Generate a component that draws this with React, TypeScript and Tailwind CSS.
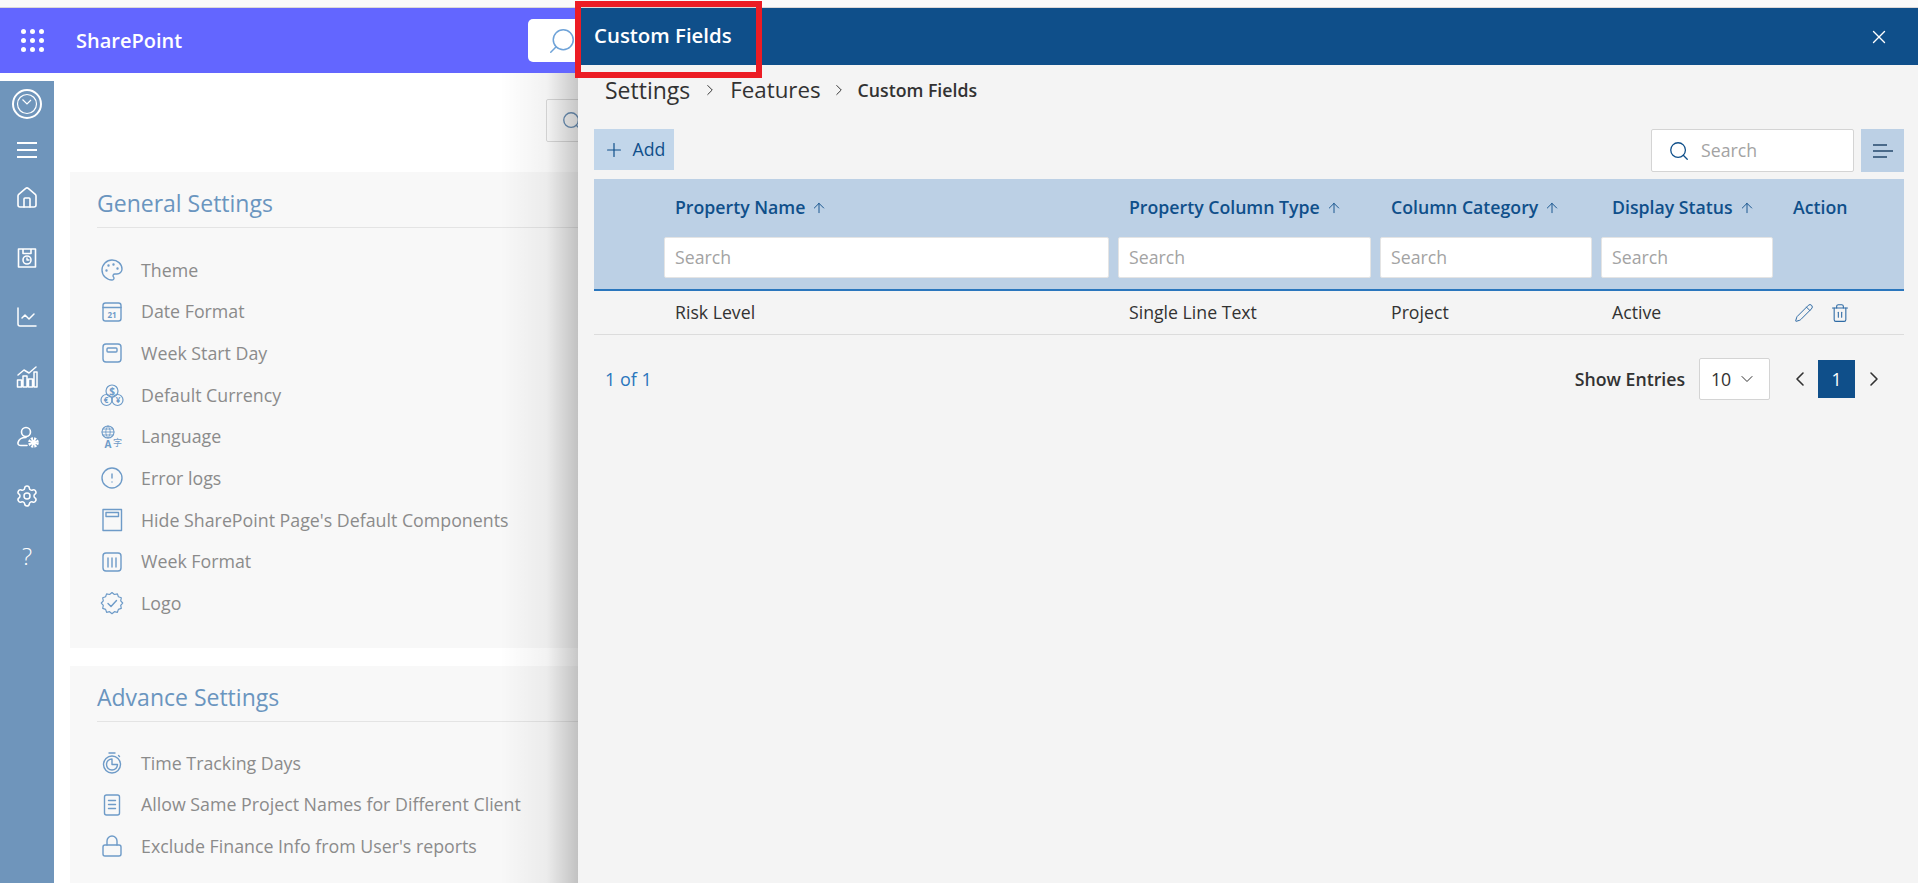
import { ArrowUp, ChevronDown, ChevronLeft, ChevronRight, CircleAlert, Home, LineChart, Lock, Palette, Pencil, Plus, Search, Settings, Trash2, X } from 'lucide-react';
import type { ReactNode } from 'react';

function Svg({ children, size = 24 }: { children: ReactNode; size?: number }) {
  return (
    <svg width={size} height={size} viewBox="0 0 24 24" fill="none" stroke="currentColor" strokeWidth="1.4" strokeLinecap="round" strokeLinejoin="round">
      {children}
    </svg>
  );
}

const DateIcon = () => (
  <Svg>
    <rect x="3" y="3" width="18" height="18" rx="2.5" />
    <path d="M3 7.5h18" />
    <text x="12" y="18" textAnchor="middle" fontSize="8" fontWeight="700" fill="currentColor" stroke="none">21</text>
  </Svg>
);
const WeekIcon = () => (
  <Svg>
    <rect x="3" y="3" width="18" height="18" rx="3" />
    <rect x="7" y="7" width="10" height="4" rx="1" />
  </Svg>
);
const CurrencyIcon = () => (
  <Svg>
    <circle cx="12" cy="8" r="6" strokeWidth="1.2" />
    <circle cx="6.500" cy="17" r="5.500" strokeWidth="1.2" />
    <circle cx="17.500" cy="17" r="5.500" strokeWidth="1.2" />
    <text x="12" y="11.500" textAnchor="middle" fontSize="10" fontWeight="700" fill="currentColor" stroke="none">$</text>
    <text x="6" y="20" textAnchor="middle" fontSize="8" fontWeight="700" fill="currentColor" stroke="none">€</text>
    <text x="18" y="20" textAnchor="middle" fontSize="8" fontWeight="700" fill="currentColor" stroke="none">¥</text>
  </Svg>
);
const LanguageIcon = () => (
  <Svg>
    <circle cx="8" cy="7" r="6" strokeWidth="1.1" />
    <path d="M2 7h12M8 1c-3 3.200-3 8.800 0 12M8 1c3 3.200 3 8.800 0 12M3 4h10M3 10h10" strokeWidth="0.9" />
    <text x="8" y="22.500" textAnchor="middle" fontSize="10" fontWeight="700" fill="currentColor" stroke="none">A</text>
    <text x="17.500" y="20.500" textAnchor="middle" fontSize="9" fill="currentColor" stroke="none" fontFamily="'Noto Sans CJK SC', sans-serif">字</text>
  </Svg>
);
const PanelIcon = () => (
  <Svg>
    <rect x="3" y="1.500" width="18.500" height="21" />
    <rect x="6" y="4.500" width="12.500" height="4" />
  </Svg>
);
const WeekFormatIcon = () => (
  <Svg>
    <rect x="3" y="3" width="18" height="18" rx="3" />
    <path d="M8 8v9M12 8v9M16 8v9" />
  </Svg>
);
const TimerIcon = () => (
  <Svg>
    <path d="M9 2h6M18.500 4.500l1 1" />
    <circle cx="12" cy="13.500" r="8.500" />
    <path d="M12 8a5.500 5.500 0 1 0 5.500 5.500H12z" />
  </Svg>
);
const DocIcon = () => (
  <Svg>
    <rect x="4.500" y="2" width="15" height="20" rx="2" />
    <path d="M8.500 7.500h7M8.500 11.500h7M8.500 15.500h7" />
  </Svg>
);
const LogoIcon = () => (
  <Svg>
    <path d="M12 1.500l2.400 2 3-.6 1 2.900 2.900 1-.6 3 2 2.200-2 2.400.6 3-2.900 1-1 2.900-3-.6-2.400 2-2.400-2-3 .6-1-2.900-2.900-1 .6-3-2-2.400 2-2.200-.6-3 2.900-1 1-2.900 3 .6z" strokeWidth="1.200" />
    <path d="M8 12.500l3 3 5.500-6" />
  </Svg>
);

const generalItems: { label: string; icon: ReactNode }[] = [
  { label: 'Theme', icon: <Palette size={24} strokeWidth={1.4} /> },
  { label: 'Date Format', icon: <DateIcon /> },
  { label: 'Week Start Day', icon: <WeekIcon /> },
  { label: 'Default Currency', icon: <CurrencyIcon /> },
  { label: 'Language', icon: <LanguageIcon /> },
  { label: 'Error logs', icon: <CircleAlert size={24} strokeWidth={1.4} /> },
  { label: "Hide SharePoint Page's Default Components", icon: <PanelIcon /> },
  { label: 'Week Format', icon: <WeekFormatIcon /> },
  { label: 'Logo', icon: <LogoIcon /> },
];

const advanceItems: { label: string; icon: ReactNode }[] = [
  { label: 'Time Tracking Days', icon: <TimerIcon /> },
  { label: 'Allow Same Project Names for Different Client', icon: <DocIcon /> },
  { label: "Exclude Finance Info from User's reports", icon: <Lock size={24} strokeWidth={1.4} /> },
];

const columns = ['Property Name', 'Property Column Type', 'Column Category', 'Display Status'];

function SettingsCard({ title, items, className, listTop }: { title: string; items: { label: string; icon: ReactNode }[]; className: string; listTop: string }) {
  return (
    <section className={`bg-[#f8f8f8] pl-[27px] ${className}`}>
      <h2 className="h-[56px] flex items-end pb-[7px] border-b border-[#e4e4e4] text-[23px] text-[#6a95bf]">{title}</h2>
      <ul className={listTop}>
        {items.map((item) => (
          <li key={item.label} className="h-[41.7px] flex items-center text-[17.8px] text-[#8b8b8b]">
            <span className="w-[30px] flex justify-center text-[#6e9bc8]">{item.icon}</span>
            <span className="ml-[14px]">{item.label}</span>
          </li>
        ))}
      </ul>
    </section>
  );
}

function Sidebar() {
  const icons = [
    <Home key="home" size={24} strokeWidth={1.6} />,
    <Svg key="time">
      <path d="M3.500 3h17v18h-17zM8 3v4.500h8V3" strokeWidth="1.600" />
      <circle cx="12" cy="14" r="4" strokeWidth="1.600" />
      <path d="M12 12v2h2" />
    </Svg>,
    <LineChart key="chart" size={24} strokeWidth={1.5} />,
    <Svg key="bars">
      <path d="M2.500 22v-7h4v7zM8 22V11h4v11zM13.500 22v-8h4v8zM19 22V7h3v15zM3 10l6-5 5 3 7-6" strokeWidth="1.500" />
    </Svg>,
    <Svg key="user">
      <circle cx="11" cy="7" r="4.500" strokeWidth="1.600" />
      <path d="M12 20.500H6c-2 0-3.500-1-3-3 .7-3 4-5 8-5" strokeWidth="1.600" />
      <circle cx="18.500" cy="17.500" r="3.800" strokeWidth="3" strokeDasharray="2 1" strokeLinecap="butt" />
      <circle cx="18.500" cy="17.500" r="2.800" fill="currentColor" stroke="none" />
    </Svg>,
    <Settings key="gear" size={24} strokeWidth={1.5} />,
    <span key="help" className="text-[24px] font-light leading-none">?</span>,
  ];
  return (
    <aside className="w-[54px] shrink-0 bg-[#6f95bb] text-white flex flex-col items-center">
      <div className="mt-[8px] w-[30px] h-[30px] rounded-full border-2 border-white flex items-center justify-center">
        <svg width="22" height="22" viewBox="0 0 22 22" fill="none" stroke="currentColor" strokeWidth="1.2">
          <circle cx="11" cy="11" r="9.500" />
          <path d="M6.500 6.500L11 11l4-4" />
        </svg>
      </div>
      <div className="mt-[23px] w-[20px] flex flex-col gap-[5px]">
        <span className="h-[2px] bg-white" />
        <span className="h-[2px] bg-white" />
        <span className="h-[2px] bg-white" />
      </div>
      <div className="mt-[10px] flex flex-col">
        {icons.map((icon) => (
          <div key={icon.key} className="h-[59.700px] flex items-center justify-center">{icon}</div>
        ))}
      </div>
    </aside>
  );
}

function CustomFieldsPanel() {
  return (
    <div className="absolute left-[578px] right-0 top-[8px] bottom-0 bg-[#f4f4f4] text-[#323232]">
      <div className="absolute right-full top-[65px] bottom-0 w-[78px] bg-[linear-gradient(to_right,transparent,rgba(0,0,0,0.05)_60%,rgba(0,0,0,0.22))]" />
      <div className="ml-[3px] h-[57px] bg-[#0f4f8a] text-white flex items-center justify-between pl-[13px] pr-[28px]">
        <span className="text-[20.4px] font-semibold -mt-[2px]">Custom Fields</span>
        <X size={22} strokeWidth={1.5} />
      </div>

      <div className="h-[50px] pl-[27px] flex items-center">
        <span className="text-[23px]">Settings</span>
        <ChevronRight size={18} strokeWidth={1.3} className="mx-[11px]" />
        <span className="text-[22.3px]">Features</span>
        <ChevronRight size={18} strokeWidth={1.3} className="ml-[9px] mr-[10px]" />
        <span className="text-[17.7px] font-semibold">Custom Fields</span>
      </div>

      <div className="mt-[14px] ml-[16px] mr-[14px] flex justify-between items-start">
        <button className="w-[80px] h-[41px] bg-[#c2d6ea] text-[#0f4f8a] text-[17.7px] flex items-center justify-center gap-[8px]">
          <Plus size={22} strokeWidth={1.3} />
          Add
        </button>
        <div className="flex gap-[7px]">
          <div className="w-[203px] h-[43px] bg-white border border-[#d4d4d4] rounded-[2px] flex items-center pl-[16px] gap-[11px]">
            <Search size={22} strokeWidth={1.4} className="text-[#0f4f8a]" />
            <span className="text-[17.7px] text-[#a3a3a3]">Search</span>
          </div>
          <div className="w-[43px] h-[43px] bg-[#bcd0e5] flex flex-col justify-center gap-[4px] pl-[12px]">
            <span className="w-[14px] h-[2px] bg-[#4a6a8a]" />
            <span className="w-[20px] h-[2px] bg-[#4a6a8a]" />
            <span className="w-[14px] h-[2px] bg-[#4a6a8a]" />
          </div>
        </div>
      </div>

      <div className="mt-[7px] ml-[16px] mr-[14px]">
        <div className="h-[112px] bg-[#bcd0e5] border-b-2 border-[#2a76bd] pl-[70px] grid grid-cols-[454px_262px_221px_181px_1fr] grid-rows-[57px_42px]">
          {columns.map((col) => (
            <div key={col} className="pl-[11px] flex items-center gap-[6px] text-[17.7px] font-semibold text-[#0f4f8a]">
              {col}
              <ArrowUp size={16} strokeWidth={1.4} />
            </div>
          ))}
          <div className="pl-[11px] flex items-center text-[17.7px] font-semibold text-[#0f4f8a]">Action</div>
          {columns.map((col) => (
            <div key={col} className="pt-[1px] pr-[9px]">
              <div className="h-[41px] bg-white border border-[#e4e4e4] rounded-[2px] flex items-center pl-[10px] text-[17.7px] text-[#a3a3a3]">Search</div>
            </div>
          ))}
        </div>
        <div className="h-[44px] border-b border-[#dcdcdc] pl-[70px] grid grid-cols-[454px_262px_221px_181px_1fr] items-center text-[17.7px]">
          <span className="pl-[11px]">Risk Level</span>
          <span className="pl-[11px]">Single Line Text</span>
          <span className="pl-[11px]">Project</span>
          <span className="pl-[11px]">Active</span>
          <span className="pl-[12px] flex items-center gap-[16px] text-[#2f6ba5]">
            <Pencil size={20} strokeWidth={1.2} />
            <Trash2 size={20} strokeWidth={1.3} />
          </span>
        </div>

        <div className="mt-[23px] flex items-center justify-between">
          <span className="ml-[11px] text-[18px] text-[#2a76bd]">1 of 1</span>
          <div className="flex items-center">
            <span className="text-[17.7px] font-semibold">Show Entries</span>
            <div className="ml-[14px] w-[71px] h-[42px] bg-white border border-[#d4d4d4] rounded-[2px] flex items-center justify-between pl-[11px] pr-[12px] text-[17.7px]">
              10
              <ChevronDown size={20} strokeWidth={1.2} />
            </div>
            <ChevronLeft size={24} strokeWidth={1.6} className="ml-[18px]" />
            <span className="ml-[6px] w-[37px] h-[38px] bg-[#0f4f8a] text-white text-[17.7px] flex items-center justify-center">1</span>
            <ChevronRight size={24} strokeWidth={1.6} className="ml-[7px] mr-[18px]" />
          </div>
        </div>
      </div>
    </div>
  );
}

export default function App() {
  return (
    <div className="relative h-[883px] w-[1918px] overflow-hidden bg-white font-['Open_Sans','Noto_Sans',sans-serif]">
      <div className="h-[8px] border-b border-[#dcd8d8] bg-[#fafafa]" />
      <header className="h-[65px] bg-[#6366ff] text-white flex items-center">
        <div className="ml-[21px] grid grid-cols-3 gap-[4px]">
          {Array.from({ length: 9 }).map((_, i) => (
            <span key={i} className="w-[5px] h-[5px] rounded-full bg-white" />
          ))}
        </div>
        <span className="ml-[32px] text-[20px] font-semibold">SharePoint</span>
        <div className="ml-[346px] w-[300px] h-[43px] bg-white rounded-[5px] flex items-center pl-[19px] text-[#6fa3d8]">
          <Search size={30} strokeWidth={1.2} className="-scale-x-100" />
        </div>
      </header>
      <div className="flex h-[810px] pt-[8px]">
        <Sidebar />
        <main className="flex-1 pl-[16px]">
          <div className="h-[91px] pt-[18px] pl-[476px]">
            <div className="w-[300px] h-[43px] border border-[#dcdcdc] rounded-[2px] flex items-center pl-[14px] text-[#6f95bb]">
              <Search size={22} strokeWidth={1.5} />
            </div>
          </div>
          <SettingsCard title="General Settings" items={generalItems} className="h-[476px]" listTop="mt-[21px]" />
          <SettingsCard title="Advance Settings" items={advanceItems} className="mt-[18px] h-[300px]" listTop="mt-[20px]" />
        </main>
      </div>
      <CustomFieldsPanel />
      <div className="absolute left-[575px] top-[1px] w-[187px] h-[77px] border-[6px] border-[#ec1c24]" />
    </div>
  );
}
